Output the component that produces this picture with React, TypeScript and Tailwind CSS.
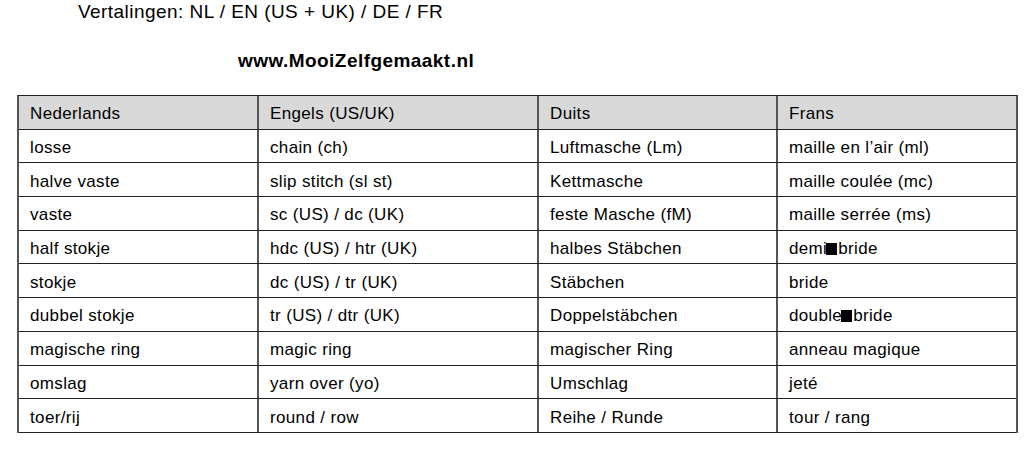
const rows: string[][] = [
  ["losse", "chain (ch)", "Luftmasche (Lm)", "maille en l’air (ml)"],
  ["halve vaste", "slip stitch (sl st)", "Kettmasche", "maille coulée (mc)"],
  ["vaste", "sc (US) / dc (UK)", "feste Masche (fM)", "maille serrée (ms)"],
  ["half stokje", "hdc (US) / htr (UK)", "halbes Stäbchen", "demi|bride"],
  ["stokje", "dc (US) / tr (UK)", "Stäbchen", "bride"],
  ["dubbel stokje", "tr (US) / dtr (UK)", "Doppelstäbchen", "double|bride"],
  ["magische ring", "magic ring", "magischer Ring", "anneau magique"],
  ["omslag", "yarn over (yo)", "Umschlag", "jeté"],
  ["toer/rij", "round / row", "Reihe / Runde", "tour / rang"],
];

const header = ["Nederlands", "Engels (US/UK)", "Duits", "Frans"];

// the PDF had no glyph for the hyphen, so it shows a filled box
function CellText({ text }: { text: string }) {
  if (!text.includes("|")) return <>{text}</>;
  const [a, b] = text.split("|");
  return (
    <>
      {a}
      <span className="-ml-[1px] mr-[1px] inline-block h-[12px] w-[11px] bg-black" />
      {b}
    </>
  );
}

function Row({ cells, head }: { cells: string[]; head?: boolean }) {
  return (
    <div
      className={`grid h-[33.7px] grid-cols-[238px_280px_239px_240px] border-b border-[#222] ${
        head ? "bg-[#d9d9d9]" : "bg-white"
      }`}
    >
      {cells.map((c, i) => (
        <div
          key={i}
          className={`flex items-center whitespace-nowrap pl-[11px] pt-[4px] ${
            i > 0 ? "border-l-2 border-[#555]" : ""
          }`}
        >
          <CellText text={c} />
        </div>
      ))}
    </div>
  );
}

export default function App() {
  return (
    <div className="h-[459px] w-[1036px] overflow-hidden bg-white font-['Liberation_Sans',Arial,sans-serif] text-black">
      <p className="pl-[78px] pt-[1px] text-[19px] leading-[22px] tracking-[0.45px]">
        Vertalingen: NL / EN (US + UK) / DE / FR
      </p>
      <p className="mt-[27px] pl-[238px] text-[19px] font-bold leading-[22px] tracking-[0.45px]">
        www.MooiZelfgemaakt.nl
      </p>
      <div className="ml-[17px] mt-[23px] w-[1001px] border-x-2 border-t border-x-[#555] border-t-[#222] text-[17px] leading-[20px] tracking-[0.35px]">
        <Row cells={header} head />
        {rows.map((r, i) => (
          <Row key={i} cells={r} />
        ))}
      </div>
    </div>
  );
}
